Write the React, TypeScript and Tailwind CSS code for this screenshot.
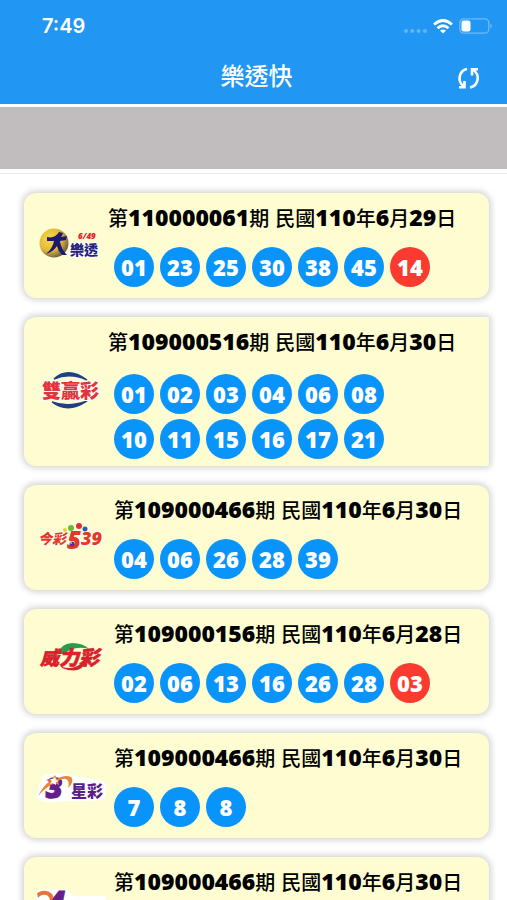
import React from 'react';

type Draw = {
  id: string;
  name: string;
  logo: React.ReactNode;
  title: string;
  rows: string[][];
  special?: string;
  wide?: boolean;
};

const LOGO_FONT = "font-['Noto_Sans_CJK_TC',sans-serif] font-black";

function LogoFrame({ label, children }: { label: string; children: React.ReactNode }) {
  return (
    <svg viewBox="0 0 68 44" role="img" aria-label={label} className="h-11 w-[68px] shrink-0 overflow-visible">
      {children}
    </svg>
  );
}

function Lotto649Logo() {
  return (
    <LogoFrame label="大樂透">
      <defs>
        <radialGradient id="gold" cx="0.35" cy="0.35" r="0.7">
          <stop offset="0" stopColor="#f8d848" />
          <stop offset="0.6" stopColor="#e2b83a" />
          <stop offset="1" stopColor="#6b5a4a" />
        </radialGradient>
      </defs>
      <circle cx="16" cy="19" r="14.5" fill="url(#gold)" />
      <path d="M9 13 Q17 15 21 8 L25 9 Q24 12 23 13 L29 12 L28 16 L22 17 Q23 25 29 31 L24 31 Q20 27 19 22 Q15 28 8 30 Q15 24 16 17 L9 17 Z" fill="#1d1a6e" />
      <text x="32" y="31" fontSize="14" fill="#25207c" stroke="#fff" strokeWidth="2" paintOrder="stroke" className={LOGO_FONT}>樂透</text>
      <text x="40" y="15" fontSize="8" fill="#e5202b" className="font-['Noto_Sans',sans-serif] font-black italic">6/49</text>
    </LogoFrame>
  );
}

function DoubleWinLogo() {
  return (
    <LogoFrame label="雙贏彩">
      <path d="M16 9 Q30 -4 49 10 Q32 2 16 9 Z" fill="#1f3f86" stroke="#1f3f86" strokeWidth="1.500" />
      <path d="M14 32 Q30 44 49 31 Q30 38 14 32 Z" fill="#1f3f86" stroke="#1f3f86" strokeWidth="1.500" />
      <text x="4" y="28" fontSize="19" fill="#e0343a" stroke="#fff" strokeWidth="2" paintOrder="stroke" className={LOGO_FONT}>雙贏彩</text>
    </LogoFrame>
  );
}

function Daily539Logo() {
  return (
    <LogoFrame label="今彩539">
      <g stroke="#fff" strokeWidth="1.500" paintOrder="stroke" fill="#e23a24">
        <text x="0" y="28" fontSize="14" className={`${LOGO_FONT} italic`}>今彩</text>
        <text x="29" y="33" fontSize="24" className="font-['Noto_Sans',sans-serif] font-black italic">5</text>
        <text x="43" y="29" fontSize="18" className="font-['Noto_Sans',sans-serif] font-black italic">39</text>
      </g>
      <circle cx="27" cy="14" r="2" fill="#e8cf3a" />
      <circle cx="33" cy="12" r="3" fill="#6fb43c" />
      <circle cx="41" cy="10" r="3" fill="#dd2f3a" />
      <circle cx="47" cy="13" r="2.500" fill="#3558b8" />
      <circle cx="34" cy="28" r="2.500" fill="#6a2a8c" />
      <circle cx="33" cy="27" r="1" fill="#c9a5dc" />
    </LogoFrame>
  );
}

function PowerLogo() {
  return (
    <LogoFrame label="威力彩">
      <path d="M20 14 Q22 4 34 3 Q45 3 51 9 Q36 5 26 14 Z" fill="#2a9a4c" />
      <path d="M24 27 Q38 31 46 20 L49 19 Q44 36 24 28 Z" fill="#d9202c" />
      <text x="2" y="25" fontSize="18" fill="#d9202c" stroke="#d9202c" strokeWidth="0.600" className={`${LOGO_FONT} italic`}>
        <tspan fontSize="19">威</tspan><tspan fontSize="20">力</tspan><tspan fontSize="20">彩</tspan>
      </text>
    </LogoFrame>
  );
}

function ThreeStarLogo() {
  return (
    <LogoFrame label="3星彩">
      <path d="M-2 31 L5 12 Q20 6 36 12 L66 17 Q71 26 66 36 L10 38 Q-2 38 -2 31 Z" fill="#fff" />
      <text x="8" y="34" fontSize="28" fill="#63208a" stroke="#63208a" strokeWidth="1.500" className="font-['Noto_Sans',sans-serif] font-black italic">3</text>
      <path d="M0 32 Q5 22 12 17 L7 16 L14 15 L17 11 L19 15 Q26 10 33 13 Q37 17 30 24 Q32 17 28 15 Q24 14 20 17 L21 21 L16 19 Q7 24 0 32 Z" fill="#ea8436" />
      <path d="M17 13 L18 16 L21 17 L18 18 L18 21 L15 19 L12 20 L14 17 L12 15 L15 15 Z" fill="#fff" />
      <text x="33" y="33" fontSize="16" fill="#5a1f86" className={LOGO_FONT}>星彩</text>
    </LogoFrame>
  );
}

function FourStarLogo() {
  return (
    <LogoFrame label="4星彩">
      <path d="M-2 34 V5 Q-2 2 2 1 L30 2 L36 8 H68 V34 Z" fill="#fff" />
      <text x="9" y="26" fontSize="31" fill="#63208a" stroke="#63208a" strokeWidth="1" className="font-['Noto_Sans',sans-serif] font-black italic">4</text>
      <path d="M-1 5 Q8 0 14 6 Q17 10 12 14 Q12 8 8 7 Q3 6 0 10 Z" fill="#ea7436" />
      <text x="33" y="30" fontSize="16" fill="#5a1f86" className={LOGO_FONT}>星彩</text>
    </LogoFrame>
  );
}

const draws: Draw[] = [
  {
    id: 'lotto649',
    name: '大樂透',
    logo: <Lotto649Logo />,
    title: '第110000061期 民國110年6月29日',
    rows: [['01', '23', '25', '30', '38', '45']],
    special: '14',
    wide: true,
  },
  {
    id: 'double',
    name: '雙贏彩',
    logo: <DoubleWinLogo />,
    title: '第109000516期 民國110年6月30日',
    rows: [
      ['01', '02', '03', '04', '06', '08'],
      ['10', '11', '15', '16', '17', '21'],
    ],
    wide: true,
  },
  {
    id: 'daily539',
    name: '今彩539',
    logo: <Daily539Logo />,
    title: '第109000466期 民國110年6月30日',
    rows: [['04', '06', '26', '28', '39']],
  },
  {
    id: 'power',
    name: '威力彩',
    logo: <PowerLogo />,
    title: '第109000156期 民國110年6月28日',
    rows: [['02', '06', '13', '16', '26', '28']],
    special: '03',
  },
  {
    id: 'star3',
    name: '3星彩',
    logo: <ThreeStarLogo />,
    title: '第109000466期 民國110年6月30日',
    rows: [['7', '8', '8']],
  },
  {
    id: 'star4',
    name: '4星彩',
    logo: <FourStarLogo />,
    title: '第109000466期 民國110年6月30日',
    rows: [['5', '0', '3', '9']],
  },
];

function Ball({ value, special }: { value: string; special?: boolean }) {
  return (
    <li
      className={`flex size-10 items-center justify-center rounded-full pb-px font-['Noto_Sans',sans-serif] text-[22px] leading-none font-black text-white ${
        special ? 'bg-[#fb3b30]' : 'bg-[#0894fb]'
      }`}
    >
      {value}
    </li>
  );
}

function DrawTitle({ text }: { text: string }) {
  return (
    <>
      {text.split(/([\d ]+)/).map((part, i) =>
        /^[\d ]+$/.test(part) ? (
          <span key={i} className="font-['Noto_Sans',sans-serif] text-[23px] leading-none font-black">{part}</span>
        ) : (
          <span key={i}>{part}</span>
        ),
      )}
    </>
  );
}

function DrawCard({ draw }: { draw: Draw }) {
  const double = draw.rows.length > 1;
  return (
    <article
      aria-label={draw.name}
      className={`flex items-center gap-0.5 bg-[#fdfdd1] pl-3.5 shadow-[0_0_6px_2px_rgba(0,0,0,0.18)] ${
        double ? 'rounded-l-xl rounded-r-xs' : 'rounded-xl'
      }`}
    >
      {draw.logo}
      <div className={`min-w-0 ${double ? 'pb-[7px]' : 'pb-[11px]'}`}>
        <h2
          className={`pt-2.5 font-['Noto_Sans_CJK_TC',sans-serif] text-xl leading-[30px] font-medium whitespace-nowrap text-black ${
            draw.wide ? '' : 'pl-1.5'
          }`}
        >
          <DrawTitle text={draw.title} />
        </h2>
        <div className={`flex flex-col gap-[5px] pl-1.5 ${double ? 'pt-[17px]' : 'pt-3.5'}`}>
          {draw.rows.map((row, i) => (
            <ul key={i} className="flex gap-1.5">
              {row.map((value, j) => (
                <Ball key={j} value={value} />
              ))}
              {draw.special && <Ball value={draw.special} special />}
            </ul>
          ))}
        </div>
      </div>
    </article>
  );
}

function StatusBar() {
  return (
    <div className="flex h-[52px] items-center justify-between pr-3.5 pl-[42px] text-white">
      <span className="font-['Inter',sans-serif] text-xl font-semibold">7:49</span>
      <div className="flex items-center gap-1.5">
        <svg viewBox="0 0 24 16" className="h-4 w-6 fill-white/30" aria-hidden="true">
          <circle cx="3" cy="13" r="2" />
          <circle cx="9.300" cy="13" r="2" />
          <circle cx="15.600" cy="13" r="2" />
          <circle cx="21.900" cy="13" r="2" />
        </svg>
        <svg viewBox="0 0 20 15" className="h-[15px] w-5 fill-none stroke-white" strokeWidth="2.800" aria-hidden="true">
          <path d="M1 5.500 Q10 -2.500 19 5.500" />
          <path d="M4.500 9.300 Q10 4.300 15.500 9.300" />
          <path d="M10 14.500 L7 11.500 Q10 9.300 13 11.500 Z" fill="#fff" stroke="none" />
        </svg>
        <svg viewBox="0 0 34 16" className="h-4 w-[34px]" aria-hidden="true">
          <rect x="0.800" y="0.800" width="29" height="14.400" rx="4" fill="none" stroke="#fff" strokeOpacity="0.35" strokeWidth="1.300" />
          <rect x="2.500" y="2.500" width="9" height="11" rx="2.200" fill="#fff" />
          <path d="M31.500 5.500 Q34 8 31.500 10.500 Z" fill="#fff" fillOpacity="0.45" />
        </svg>
      </div>
    </div>
  );
}

export default function App() {
  return (
    <div className="flex h-screen flex-col bg-white">
      <header className="shrink-0 bg-[#2196f3] text-white">
        <StatusBar />
        <div className="grid h-[52px] grid-cols-[1fr_auto_1fr] items-center">
          <h1 className="col-start-2 pb-1.5 pl-1.5 font-['Noto_Sans_CJK_TC',sans-serif] text-2xl leading-11 font-medium">樂透快</h1>
          <button type="button" aria-label="重新整理" className="mr-6 justify-self-end">
            <svg viewBox="0 0 28 24" className="h-6 w-7 fill-none stroke-white" strokeWidth="2.600">
              <path d="M12 3 A9.500 9.500 0 0 0 8.500 20" />
              <path d="M4 21.200 H9.500 V15" />
              <path d="M15 21.500 A9.500 9.500 0 0 0 18 4" />
              <path d="M23 3.200 H17 V9.500" />
            </svg>
          </button>
        </div>
      </header>
      <div className="mt-[3px] h-[62px] shrink-0 bg-[#c1bcbd]" />
      <main className="mt-1 flex min-h-0 flex-1 flex-col gap-[19px] overflow-y-auto border-t border-[#ece8e9] pt-[19px] pr-[18px] pb-5 pl-6 [scrollbar-width:none]">
        {draws.map((draw) => (
          <div key={draw.id} className="shrink-0">
            <DrawCard draw={draw} />
          </div>
        ))}
      </main>
    </div>
  );
}
